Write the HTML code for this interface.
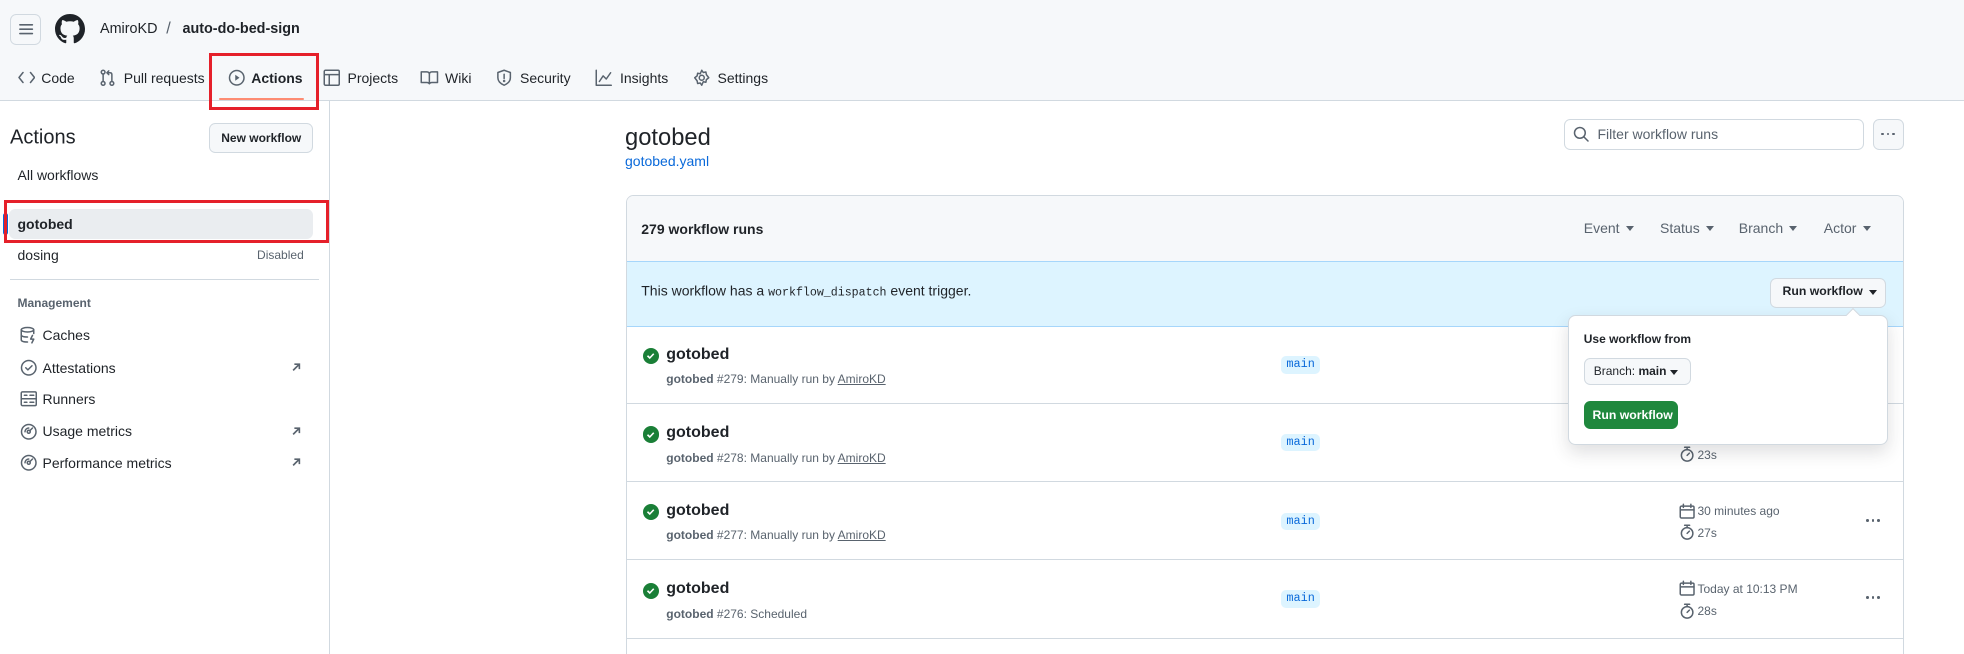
<!DOCTYPE html>
<html><head><meta charset="utf-8"><style>
*{box-sizing:border-box;margin:0;padding:0}
html,body{width:1964px;height:654px;overflow:hidden;background:#fff}
#w{zoom:1.25;width:1572px;height:523px;position:relative;overflow:hidden;font-family:"Liberation Sans",sans-serif;color:#1f2328;font-size:11.2px}
.a{position:absolute;white-space:nowrap}
.vc{transform:translateY(-50%)}
svg{display:block}
.ic{fill:none;stroke:#59636e;stroke-width:1.2;stroke-linecap:round;stroke-linejoin:round}
.g{color:#59636e}
.btn{position:absolute;border:1px solid #d1d9e0;border-radius:5px;background:#f6f8fa}
.row{position:absolute;left:501px;width:1021px;border-top:1px solid #d1d9e0;height:63px}
.chk{position:absolute;left:13px;width:13px;height:13px;border-radius:50%;background:#1a7f37}
.lab{position:absolute;left:524px;width:31px;height:14px;background:#ddf4ff;color:#0969da;border-radius:4px;font-family:"Liberation Mono",monospace;font-size:9.5px;text-align:center;line-height:14px}
.caret{display:inline-block;width:0;height:0;border-left:3.5px solid transparent;border-right:3.5px solid transparent;border-top:4px solid #59636e;vertical-align:middle;margin-left:5px}
.dots{position:absolute;display:flex;gap:2px}
.dots i{width:2.2px;height:2.2px;border-radius:50%;background:#59636e;display:block}
</style></head><body><div id="w">
<div class="a" style="left:0;top:0;width:1572px;height:81px;background:#f6f8fa;border-bottom:1px solid #d1d9e0"></div>
<div class="btn" style="left:8px;top:11px;width:25px;height:25px;background:#f6f8fa"></div>
<svg class="a" style="left:14px;top:17px" width="13" height="13"><path d="M1.5 3h10M1.5 6.5h10M1.5 10h10" stroke="#59636e" stroke-width="1.3" stroke-linecap="round"/></svg>
<svg class="a" style="left:44px;top:11px" width="24" height="24" viewBox="0 0 16 16"><path fill="#1f2328" d="M8 0C3.58 0 0 3.58 0 8c0 3.54 2.290 6.53 5.47 7.59.4.07.55-.17.55-.38 0-.19-.01-.82-.01-1.49-2.01.37-2.53-.49-2.690-.94-.09-.23-.48-.94-.82-1.13-.28-.15-.68-.52-.01-.53.63-.01 1.08.58 1.23.82.72 1.21 1.870.87 2.33.66.07-.52.28-.87.51-1.07-1.78-.2-3.64-.89-3.64-3.950 0-.87.31-1.59.82-2.15-.08-.2-.36-1.020.08-2.12 0 0 .67-.21 2.2.82.64-.18 1.32-.27 2-.27.68 0 1.36.09 2 .27 1.53-1.04 2.2-.82 2.2-.82.44 1.1.16 1.92.08 2.12.51.56.82 1.27.82 2.15 0 3.07-1.87 3.75-3.65 3.95.29.25.54.73.54 1.48 0 1.07-.01 1.93-.01 2.2 0 .21.15.46.55.38A8.013 8.013 0 0016 8c0-4.42-3.58-8-8-8z"/></svg>
<div class="a vc" style="left:80px;top:23px;font-size:11.5px">AmiroKD</div>
<div class="a vc g" style="left:133px;top:23px;font-size:13px">/</div>
<div class="a vc" style="left:146px;top:23px;font-size:11.5px;font-weight:bold">auto-do-bed-sign</div>
<svg class="a ic" style="left:14px;top:56px" width="14" height="12"><path d="M4 2L0.8 6 4 10M10 2l3.2 4L10 10"/></svg>
<div class="a vc" style="left:33px;top:62px">Code</div>
<svg class="a ic" style="left:80px;top:55px" width="12" height="14"><circle cx="2.5" cy="2.5" r="1.5"/><circle cx="2.5" cy="11.5" r="1.5"/><circle cx="9.5" cy="11.5" r="1.5"/><path d="M2.5 4v6M9.5 10V4.5Q9.5 3 8 3H6M7 1.5L5.5 3 7 4.5"/></svg>
<div class="a vc" style="left:99px;top:62px">Pull requests</div>
<svg class="a ic" style="left:182px;top:55px" width="14" height="14"><circle cx="7" cy="7" r="5.8"/><path d="M5.8 4.6v4.8l3.4-2.4z" fill="#59636e" stroke="none"/></svg>
<div class="a vc" style="left:201px;top:62px;font-weight:bold">Actions</div>
<div class="a" style="left:175px;top:78px;width:68px;height:2px;background:#fd8c73;border-radius:2px"></div>
<svg class="a ic" style="left:258px;top:55px" width="14" height="14"><rect x="1" y="1" width="12" height="12" rx="1"/><path d="M1 4.5h12M5 4.5V13"/></svg>
<div class="a vc" style="left:278px;top:62px">Projects</div>
<svg class="a ic" style="left:336px;top:56px" width="15" height="12"><path d="M1 1.5h4.5Q7.5 1.5 7.5 3.5V11Q7 10 5.5 10H1zM14 1.5H9.5Q7.5 1.5 7.5 3.5V11Q8 10 9.5 10H14z"/></svg>
<div class="a vc" style="left:356px;top:62px">Wiki</div>
<svg class="a ic" style="left:397px;top:55px" width="13" height="14"><path d="M6.5 1L1.5 2.8V7q0 3.8 5 6 5-2.2 5-6V2.8z"/><path d="M6.5 4.2v3.4"/><circle cx="6.5" cy="9.6" r=".4"/></svg>
<div class="a vc" style="left:416px;top:62px">Security</div>
<svg class="a ic" style="left:476px;top:55px" width="14" height="14"><path d="M1 1v12h12M3.5 10l3-4.5 2.5 2.5 3.5-5"/></svg>
<div class="a vc" style="left:496px;top:62px">Insights</div>
<svg class="a ic" style="left:554px;top:55px" width="14" height="14"><circle cx="7" cy="7" r="2"/><path d="M7 1l1.2 1.8 2.1-.4.4 2.1L12.6 7l-1.9 1.5-.4 2.1-2.1-.4L7 13l-1.2-1.8-2.1.4-.4-2.1L1.4 7l1.9-1.5.4-2.1 2.1.4z"/></svg>
<div class="a vc" style="left:574px;top:62px">Settings</div>
<div class="a" style="left:167px;top:42px;width:88px;height:46px;border:3px solid #e5202a"></div>
<div class="a" style="left:263px;top:81px;width:1px;height:443px;background:#d1d9e0"></div>
<div class="a vc" style="left:8px;top:110px;font-size:16px">Actions</div>
<div class="btn" style="left:167px;top:98px;width:83px;height:24px"></div>
<div class="a vc" style="left:177px;top:110px;font-size:9.6px;font-weight:bold">New workflow</div>
<div class="a vc" style="left:14px;top:140px">All workflows</div>
<div class="a" style="left:7px;top:167px;width:243px;height:24px;background:#eaedf0;border-radius:5px"></div>
<div class="a" style="left:2px;top:170px;width:4px;height:18px;background:#0969da;border-radius:2px"></div>
<div class="a vc" style="left:14px;top:179px;font-weight:bold">gotobed</div>
<div class="a" style="left:3px;top:160px;width:260px;height:34px;border:3px solid #e5202a"></div>
<div class="a vc" style="left:14px;top:204px">dosing</div>
<div class="a vc g" style="right:1329px;top:204px;font-size:9.6px">Disabled</div>
<div class="a" style="left:8px;top:223px;width:247px;height:1px;background:#d1d9e0"></div>
<div class="a vc g" style="left:14px;top:242px;font-size:9.6px;font-weight:bold">Management</div>
<svg class="a ic" style="left:16px;top:261px" width="14" height="14"><ellipse cx="6" cy="3" rx="5" ry="1.8"/><path d="M1 3v8q0 1.8 5 1.8M11 3v3M1 7q0 1.8 5 1.8M10 7.5l-1.5 3h2.5l-1.5 3"/></svg>
<div class="a vc" style="left:34px;top:268px">Caches</div>
<svg class="a ic" style="left:16px;top:287px" width="14" height="14"><circle cx="7" cy="7" r="5.8"/><path d="M4.6 7l1.7 1.7L9.6 5.4"/></svg>
<div class="a vc" style="left:34px;top:294px">Attestations</div>
<svg class="a ic" style="left:16px;top:312px" width="14" height="14"><rect x="1" y="1.5" width="12" height="11" rx="1"/><path d="M1 7h12M3.5 4.2h2M3.5 9.8h2M8 4.2h3M8 9.8h3"/></svg>
<div class="a vc" style="left:34px;top:319px">Runners</div>
<svg class="a ic" style="left:16px;top:338px" width="14" height="14"><circle cx="7" cy="7" r="5.8"/><circle cx="7" cy="7" r="1.2"/><path d="M7.8 6.2L10 4M4 7a3 3 0 013-3"/></svg>
<div class="a vc" style="left:34px;top:345px">Usage metrics</div>
<svg class="a ic" style="left:16px;top:363px" width="14" height="14"><circle cx="7" cy="7" r="5.8"/><circle cx="7" cy="7" r="1.2"/><path d="M7.8 6.2L10 4M4 7a3 3 0 013-3"/></svg>
<div class="a vc" style="left:34px;top:370px">Performance metrics</div>
<svg class="a" style="left:232px;top:289px" width="10" height="10"><path d="M2.5 7.5L7.5 2.5M3.5 2.5h4v4" stroke="#59636e" stroke-width="1.3" fill="none"/></svg>
<svg class="a" style="left:232px;top:340px" width="10" height="10"><path d="M2.5 7.5L7.5 2.5M3.5 2.5h4v4" stroke="#59636e" stroke-width="1.3" fill="none"/></svg>
<svg class="a" style="left:232px;top:365px" width="10" height="10"><path d="M2.5 7.5L7.5 2.5M3.5 2.5h4v4" stroke="#59636e" stroke-width="1.3" fill="none"/></svg>
<div class="a vc" style="left:500px;top:110px;font-size:19px">gotobed</div>
<div class="a vc" style="left:500px;top:129px;color:#0969da">gotobed.yaml</div>
<div class="a" style="left:1251px;top:95px;width:240px;height:25px;border:1px solid #d1d9e0;border-radius:5px;background:#fff"></div>
<svg class="a ic" style="left:1258px;top:101px" width="13" height="13"><circle cx="5.5" cy="5.5" r="4.3"/><path d="M8.7 8.7L12 12"/></svg>
<div class="a vc g" style="left:1278px;top:107px">Filter workflow runs</div>
<div class="btn" style="left:1498px;top:95px;width:25px;height:25px"></div>
<div class="dots" style="left:1505px;top:106px"><i></i><i></i><i></i></div>
<div class="a" style="left:501px;top:156px;width:1022px;height:380px;border:1px solid #d1d9e0;border-radius:6px;overflow:hidden">
 <div style="height:52px;background:#f6f8fa"></div>
 <div style="height:53px;background:#ddf4ff;border-top:1px solid #a6d6fb;border-bottom:1px solid #a6d6fb"></div>
</div>
<div class="a vc" style="left:513px;top:183px;font-weight:bold">279 workflow runs</div>
<div class="a vc g" style="left:1267px;top:182px">Event<span class="caret"></span></div>
<div class="a vc g" style="left:1328px;top:182px">Status<span class="caret"></span></div>
<div class="a vc g" style="left:1391px;top:182px">Branch<span class="caret"></span></div>
<div class="a vc g" style="left:1459px;top:182px">Actor<span class="caret"></span></div>
<div class="a vc" style="left:513px;top:233px">This workflow has a <span style="font-family:'Liberation Mono',monospace;font-size:9.3px">workflow_dispatch</span> event trigger.</div>
<div class="btn" style="left:1416px;top:222px;width:93px;height:24px"></div>
<div class="a vc" style="left:1426px;top:233px;font-size:9.8px;font-weight:bold">Run workflow<span class="caret" style="border-top-color:#1f2328"></span></div>
<div class="row" style="top:322px"></div>
<div class="row" style="top:385px"></div>
<div class="row" style="top:447px"></div>
<div class="row" style="top:510px"></div>
<div class="a" style="left:501px;top:260px;width:1021px;height:62px">
 <div class="chk" style="top:18px"></div><svg class="a" style="left:15px;top:20px" width="9" height="9"><path d="M2 4.6l1.8 1.8L7 3" stroke="#fff" stroke-width="1.3" fill="none"/></svg>
 <div class="a vc" style="left:32px;top:24px;font-size:12.8px;font-weight:bold">gotobed</div>
 <div class="a vc g" style="left:32px;top:43px;font-size:9.6px"><b>gotobed</b> #279: Manually run by <u>AmiroKD</u></div>
 <div class="lab" style="top:25px">main</div>
</div>
<div class="a" style="left:501px;top:322px;width:1021px;height:62px">
 <div class="chk" style="top:19px"></div><svg class="a" style="left:15px;top:21px" width="9" height="9"><path d="M2 4.6l1.8 1.8L7 3" stroke="#fff" stroke-width="1.3" fill="none"/></svg>
 <div class="a vc" style="left:32px;top:24px;font-size:12.8px;font-weight:bold">gotobed</div>
 <div class="a vc g" style="left:32px;top:44px;font-size:9.6px"><b>gotobed</b> #278: Manually run by <u>AmiroKD</u></div>
 <div class="lab" style="top:25px">main</div>
 <svg class="a ic" style="left:842px;top:35px" width="13" height="13"><circle cx="6.5" cy="7.5" r="4.6"/><path d="M4.5 1h4M6.5 1v2M6.5 7.5l1.8-1.8"/></svg>
 <div class="a vc g" style="left:857px;top:42px;font-size:9.6px">23s</div>
</div>
<div class="a" style="left:501px;top:385px;width:1021px;height:62px">
 <div class="chk" style="top:18px"></div><svg class="a" style="left:15px;top:20px" width="9" height="9"><path d="M2 4.6l1.8 1.8L7 3" stroke="#fff" stroke-width="1.3" fill="none"/></svg>
 <div class="a vc" style="left:32px;top:24px;font-size:12.8px;font-weight:bold">gotobed</div>
 <div class="a vc g" style="left:32px;top:43px;font-size:9.6px"><b>gotobed</b> #277: Manually run by <u>AmiroKD</u></div>
 <div class="lab" style="top:25px">main</div>
 <svg class="a ic" style="left:842px;top:17px" width="13" height="13"><rect x="1" y="2.5" width="11" height="9.5" rx="1"/><path d="M1 5.5h11M3.5 1v2.5M9.5 1v2.5"/></svg>
 <div class="a vc g" style="left:857px;top:24px;font-size:9.6px">30 minutes ago</div>
 <svg class="a ic" style="left:842px;top:34px" width="13" height="13"><circle cx="6.5" cy="7.5" r="4.6"/><path d="M4.5 1h4M6.5 1v2M6.5 7.5l1.8-1.8"/></svg>
 <div class="a vc g" style="left:857px;top:41px;font-size:9.6px">27s</div>
 <div class="dots" style="left:992px;top:30px"><i></i><i></i><i></i></div>
</div>
<div class="a" style="left:501px;top:447px;width:1021px;height:62px">
 <div class="chk" style="top:19px"></div><svg class="a" style="left:15px;top:21px" width="9" height="9"><path d="M2 4.6l1.8 1.8L7 3" stroke="#fff" stroke-width="1.3" fill="none"/></svg>
 <div class="a vc" style="left:32px;top:24px;font-size:12.8px;font-weight:bold">gotobed</div>
 <div class="a vc g" style="left:32px;top:44px;font-size:9.6px"><b>gotobed</b> #276: Scheduled</div>
 <div class="lab" style="top:25px">main</div>
 <svg class="a ic" style="left:842px;top:17px" width="13" height="13"><rect x="1" y="2.5" width="11" height="9.5" rx="1"/><path d="M1 5.5h11M3.5 1v2.5M9.5 1v2.5"/></svg>
 <div class="a vc g" style="left:857px;top:24px;font-size:9.6px">Today at 10:13 PM</div>
 <svg class="a ic" style="left:842px;top:35px" width="13" height="13"><circle cx="6.5" cy="7.5" r="4.6"/><path d="M4.5 1h4M6.5 1v2M6.5 7.5l1.8-1.8"/></svg>
 <div class="a vc g" style="left:857px;top:42px;font-size:9.6px">28s</div>
 <div class="dots" style="left:992px;top:30px"><i></i><i></i><i></i></div>
</div>
<div class="a" style="left:1254px;top:252px;width:256px;height:104px;background:#fff;border:1px solid #d1d9e0;border-radius:6px;box-shadow:0 6px 14px rgba(37,41,46,.15)"></div>
<div class="a" style="left:1478px;top:248px;width:8px;height:8px;background:#fff;border-left:1px solid #d1d9e0;border-top:1px solid #d1d9e0;transform:rotate(45deg)"></div>
<div class="a vc" style="left:1267px;top:271px;font-size:9.6px;font-weight:bold;color:#1f2328">Use workflow from</div>
<div class="btn" style="left:1267px;top:286px;width:86px;height:22px"></div>
<div class="a vc" style="left:1275px;top:297px;font-size:9.6px">Branch: <b>main</b><span class="caret" style="border-top-color:#1f2328;margin-left:3px"></span></div>
<div class="a" style="left:1267px;top:321px;width:75px;height:22px;background:#1f883d;border-radius:5px"></div>
<div class="a vc" style="left:1274px;top:332px;font-size:9.8px;font-weight:bold;color:#fff">Run workflow</div>
</div></body></html>
